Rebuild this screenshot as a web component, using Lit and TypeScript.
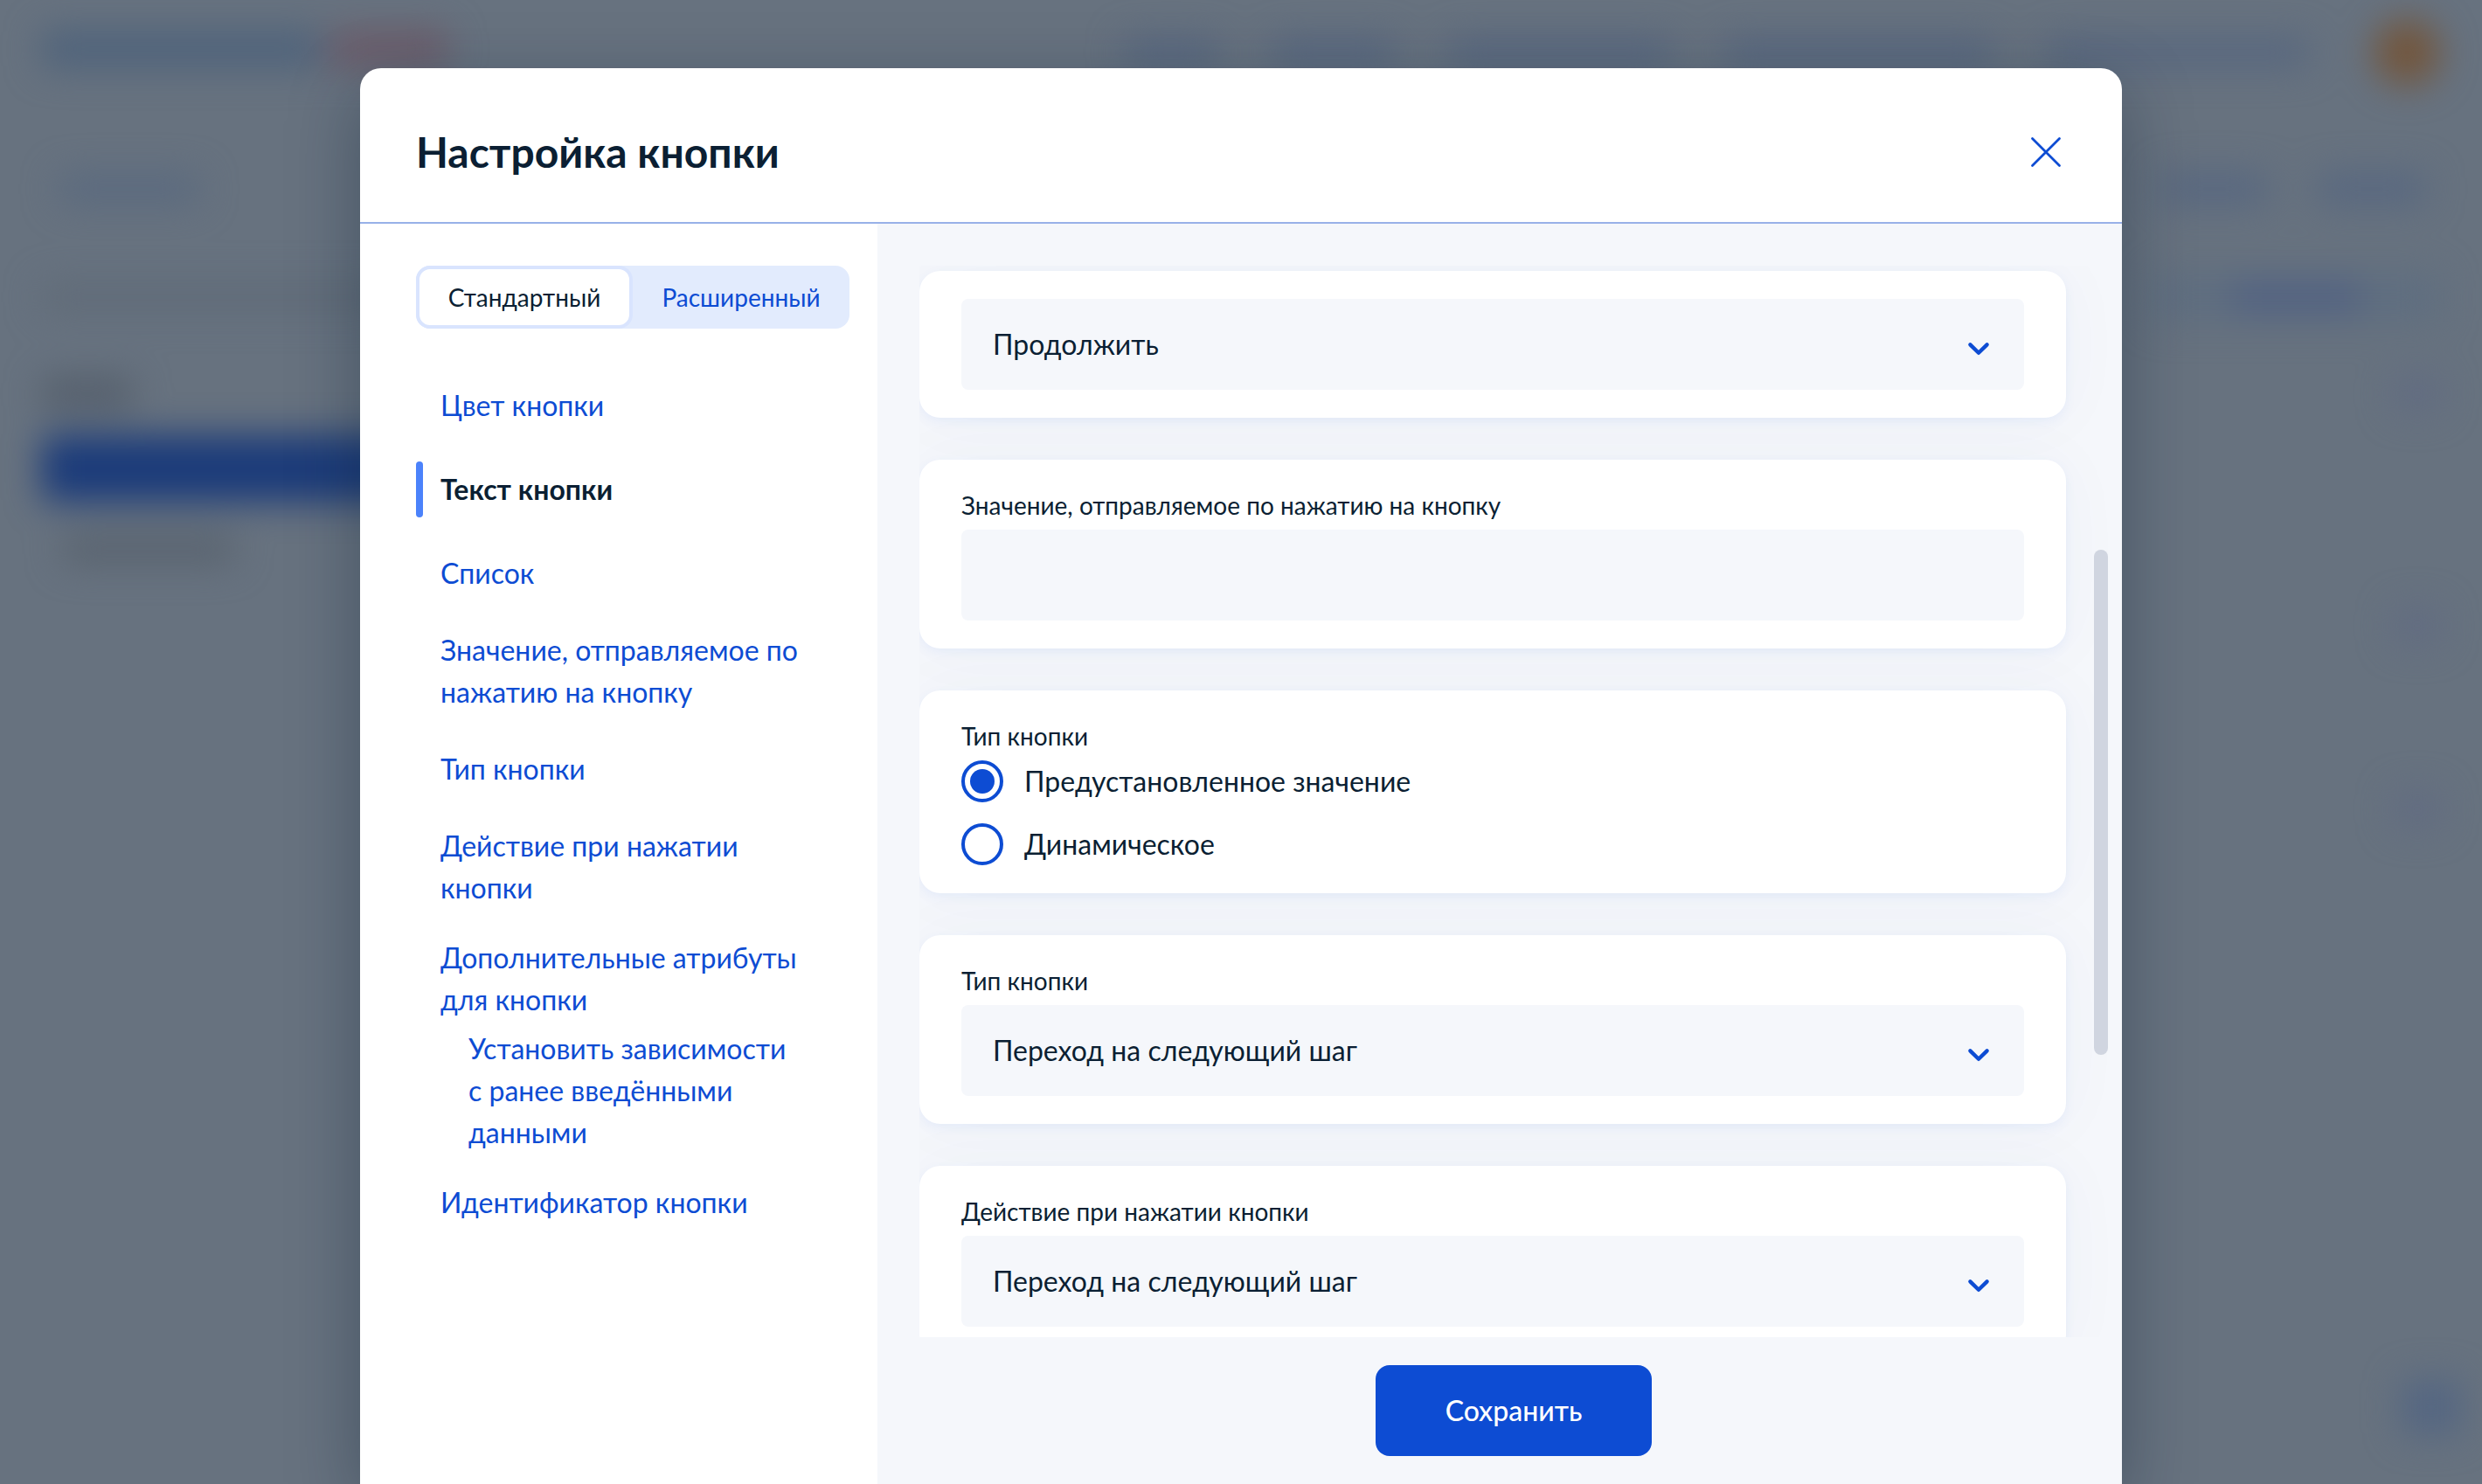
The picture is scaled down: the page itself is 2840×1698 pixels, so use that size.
import { LitElement, html, css, svg, nothing } from "lit";
import { customElement, property, state } from "lit/decorators.js";
import { classMap } from "lit/directives/class-map.js";

const INK = css`#0b1f33`;
const BLUE = css`#0d4cd3`;
const PALE = css`#f5f7fb`;

@customElement("page-backdrop")
class PageBackdrop extends LitElement {
  static styles = css`
    :host { display: block; overflow: hidden; background: #67727f; }
    .page { display: flex; flex-direction: column; filter: blur(20px); padding: 28px 48px 0; }
    .row { display: flex; align-items: center; justify-content: space-between; }
    .group { display: flex; align-items: center; }
    .bar { height: 32px; border-radius: 8px; background: #56667f; flex: none; }
    .top { height: 64px; }
    .brand { margin-bottom: 8px; }
    .logo { width: 320px; height: 44px; background: #4f637b; }
    .mark { width: 136px; height: 44px; margin-left: 8px; background: #6b5c6a; }
    .menu { gap: 62px; }
    .m1 { width: 108px; } .m2 { width: 140px; } .m3 { width: 254px; } .m4 { width: 306px; } .m5 { width: 300px; }
    .avatar { width: 76px; height: 76px; border-radius: 50%; background: #73563c; margin-left: 12px; }
    .crumbs { height: 48px; margin-top: 100px; }
    .crumb { width: 160px; margin-left: 20px; background: #59697f; }
    .tools { gap: 56px; margin-right: 16px; }
    .tool { width: 124px; height: 36px; background: #576780; }
    .intro { height: 64px; margin-top: 68px; }
    .hint { width: 400px; background: #606b78; }
    .action { display: flex; align-items: center; justify-content: center; width: 330px; height: 56px; background: #5f6e80; }
    .word { width: 148px; background: #506082; }
    .titles { height: 48px; margin-top: 54px; }
    .heading { width: 104px; height: 36px; background: #545e6b; }
    .active { width: 900px; height: 76px; margin-top: 24px; background: #1b3b7a; }
    .item { width: 196px; margin: 38px 0 0 24px; background: #58626e; }
    .dots { display: flex; flex-direction: column; align-items: flex-end; }
    .dot { width: 52px; height: 40px; background: #616b82; }
    .d2 { margin-top: 52px; } .d3 { margin-top: 170px; }
    .d4 { margin-top: 632px; width: 68px; height: 64px; margin-right: -24px; background: #546682; }
  `;
  render() {
    return html`<div class="page">
      <div class="row top">
        <div class="group brand"><div class="bar logo"></div><div class="bar mark"></div></div>
        <div class="group menu">
          <div class="bar m1"></div><div class="bar m2"></div><div class="bar m3"></div>
          <div class="bar m4"></div><div class="bar m5"></div><div class="bar avatar"></div>
        </div>
      </div>
      <div class="row crumbs">
        <div class="bar crumb"></div>
        <div class="group tools"><div class="bar tool"></div><div class="bar tool"></div></div>
      </div>
      <div class="row intro">
        <div class="bar hint"></div>
        <div class="bar action"><div class="bar word"></div></div>
      </div>
      <div class="row titles"><div class="bar heading"></div><div class="bar dot"></div></div>
      <div class="bar active"></div>
      <div class="bar item"></div>
      <div class="dots">
        <div class="bar dot d2"></div><div class="bar dot d3"></div><div class="bar dot d4"></div>
      </div>
    </div>`;
  }
}

@customElement("form-card")
class FormCard extends LitElement {
  static styles = css`
    :host {
      display: block; flex: none; padding: 32px 48px; border-radius: 24px; background: #fff;
      box-shadow: 0 4px 12px rgba(75, 123, 245, 0.08), 0 0 80px rgba(20, 80, 140, 0.035);
    }
  `;
  render() {
    return html`<slot></slot>`;
  }
}

type NavItem = { text: string; children?: NavItem[] };

const MAIN_NAV: NavItem[] = [
  { text: "Цвет кнопки" },
  { text: "Текст кнопки" },
  { text: "Список" },
  { text: "Значение, отправляемое по нажатию на кнопку" },
  { text: "Тип кнопки" },
  { text: "Действие при нажатии кнопки" },
];
const EXTRA_NAV: NavItem[] = [
  {
    text: "Дополнительные атрибуты для кнопки",
    children: [{ text: "Установить зависимости с\u00a0ранее введёнными данными" }],
  },
  { text: "Идентификатор кнопки" },
];

@customElement("settings-nav")
class SettingsNav extends LitElement {
  @state() active = "Текст кнопки";
  @property() mode = "Стандартный";
  static styles = css`
    :host { display: block; padding: 48px 32px 0 64px; box-sizing: border-box; }
    .modes { display: grid; grid-template-columns: 1fr 1fr; border-radius: 16px; background: #e2ebfd; }
    .mode {
      height: 72px; box-sizing: border-box; padding: 0; border: 4px solid transparent; border-radius: 16px;
      background: none; color: ${BLUE}; font: 400 28px/40px Lato, sans-serif; cursor: pointer;
    }
    .mode.chosen { border-color: #d9e4fe; background: #fff; color: ${INK}; }
    nav { margin: 64px 48px 0 0; }
    ul { display: flex; flex-direction: column; margin: 0; padding: 0; list-style: none; }
    .main { gap: 40px; }
    .extra { gap: 32px; margin-top: 32px; }
    .sub { margin: 8px 0 0 32px; }
    a { color: ${BLUE}; text-decoration: none; }
    .item > a { display: block; margin-left: 28px; }
    .item.on { display: flex; align-items: center; gap: 20px; }
    .item.on::before { content: ""; width: 8px; height: 64px; border-radius: 4px; background: #4b82fb; }
    .item.on > a { margin-left: 0; color: ${INK}; font-weight: 700; }
  `;
  private link(item: NavItem): unknown {
    return html`<li class=${classMap({ item: true, on: item.text === this.active })}>
      <a href="#" @click=${(e: Event) => { e.preventDefault(); this.active = item.text; }}>${item.text}</a>
      ${item.children ? html`<ul class="sub">${item.children.map((c) => this.link(c))}</ul>` : nothing}
    </li>`;
  }
  render() {
    return html`
      <div class="modes">
        ${["Стандартный", "Расширенный"].map(
          (m) => html`<button type="button" class=${classMap({ mode: true, chosen: m === this.mode })}
            aria-pressed=${m === this.mode} @click=${() => (this.mode = m)}>${m}</button>`
        )}
      </div>
      <nav>
        <ul class="main">${MAIN_NAV.map((i) => this.link(i))}</ul>
        <ul class="extra">${EXTRA_NAV.map((i) => this.link(i))}</ul>
      </nav>`;
  }
}

const chevron = svg`<svg class="chevron" width="26" height="16" viewBox="0 0 26 16" aria-hidden="true">
  <path d="M3.4 3.4 L13 12.8 L22.6 3.4" fill="none" stroke="#0d4cd3" stroke-width="4.4" stroke-linecap="round" stroke-linejoin="round"/>
</svg>`;

@customElement("app-root")
class AppRoot extends LitElement {
  static styles = css`
    :host {
      display: grid; grid-template: minmax(0, 1fr) / minmax(0, 1fr); height: 100vh; overflow: hidden;
      color: ${INK}; font: 400 32px/48px Lato, "Noto Sans", sans-serif;
    }
    page-backdrop, .stage { grid-area: 1 / 1; min-height: 0; }
    .stage { display: flex; justify-content: center; padding-top: 78px; position: relative; }
    .modal {
      display: flex; flex-direction: column; width: 90%; max-width: 2016px; min-height: 0;
      border-radius: 24px 24px 0 0; background: #fff; overflow: hidden;
      box-shadow: 0 24px 80px rgba(11, 31, 51, 0.36);
    }
    header {
      display: flex; align-items: center; justify-content: space-between;
      padding: 64px 64px 48px; border-bottom: 2px solid #98b1e8;
    }
    h1 { margin: 0; font-size: 48px; line-height: 64px; font-weight: 700; }
    .close { display: flex; padding: 4px; border: 0; background: none; cursor: pointer; }
    .body { display: grid; grid-template-columns: 592px minmax(0, 1fr); flex: 1; min-height: 0; }
    .panel { display: flex; flex-direction: column; min-height: 0; padding: 48px 16px 0 48px; background: ${PALE}; }
    .viewport { position: relative; flex: 1; min-height: 0; overflow: hidden; }
    .cards { display: flex; flex-direction: column; gap: 48px; padding: 6px 48px 0 0; }
    .thumb { position: absolute; top: 325px; right: 0; width: 16px; height: 578px; border-radius: 8px; background: #d0d5e0; }
    .label { display: block; margin-bottom: 8px; font-size: 28px; line-height: 40px; }
    .field { display: grid; align-items: center; }
    .field > * { grid-area: 1 / 1; }
    .control {
      appearance: none; width: 100%; height: 104px; box-sizing: border-box; margin: 0; padding: 0 36px;
      border: 0; border-radius: 8px; background: ${PALE}; color: inherit; font: inherit;
    }
    .chevron { justify-self: end; margin: 10px 39px 0 0; pointer-events: none; }
    .radios { display: flex; flex-direction: column; gap: 24px; }
    .radio { display: flex; align-items: center; gap: 24px; }
    .radio input {
      appearance: none; width: 48px; height: 48px; box-sizing: border-box; margin: 0; padding: 6px;
      border: 4px solid ${BLUE}; border-radius: 50%;
    }
    .radio input:checked::before { content: ""; display: block; height: 28px; border-radius: 50%; background: ${BLUE}; }
    footer { display: flex; justify-content: center; padding: 32px 0; }
    .save {
      width: 316px; height: 104px; border: 0; border-radius: 16px; background: ${BLUE}; color: #fff;
      font: 500 32px/48px Lato, sans-serif; cursor: pointer;
    }
  `;
  private select(id: string, value: string, label?: string) {
    return html`<form-card>
      ${label ? html`<label class="label" for=${id}>${label}</label>` : nothing}
      <div class="field">
        <select class="control" id=${id} aria-label=${label ?? "Список"}><option>${value}</option></select>
        ${chevron}
      </div>
    </form-card>`;
  }
  render() {
    return html`
      <page-backdrop aria-hidden="true"></page-backdrop>
      <div class="stage">
        <section class="modal" role="dialog" aria-labelledby="title">
          <header>
            <h1 id="title">Настройка кнопки</h1>
            <button class="close" type="button" aria-label="Закрыть">
              <svg width="38" height="38" viewBox="0 0 38 38" aria-hidden="true">
                <path d="M3.5 3.5 L34.5 34.5 M34.5 3.5 L3.5 34.5" stroke="#0d4cd3" stroke-width="2.8" stroke-linecap="round"/>
              </svg>
            </button>
          </header>
          <div class="body">
            <settings-nav></settings-nav>
            <div class="panel">
              <div class="viewport">
                <div class="cards">
                  ${this.select("text", "Продолжить")}
                  <form-card>
                    <label class="label" for="value">Значение, отправляемое по нажатию на кнопку</label>
                    <input class="control" id="value" type="text" />
                  </form-card>
                  <form-card>
                    <span class="label" id="kind">Тип кнопки</span>
                    <div class="radios" role="radiogroup" aria-labelledby="kind">
                      <label class="radio"><input type="radio" name="kind" checked />Предустановленное значение</label>
                      <label class="radio"><input type="radio" name="kind" />Динамическое</label>
                    </div>
                  </form-card>
                  ${this.select("type", "Переход на следующий шаг", "Тип кнопки")}
                  ${this.select("action", "Переход на следующий шаг", "Действие при нажатии кнопки")}
                </div>
                <div class="thumb"></div>
              </div>
              <footer><button class="save" type="button">Сохранить</button></footer>
            </div>
          </div>
        </section>
      </div>`;
  }
}
